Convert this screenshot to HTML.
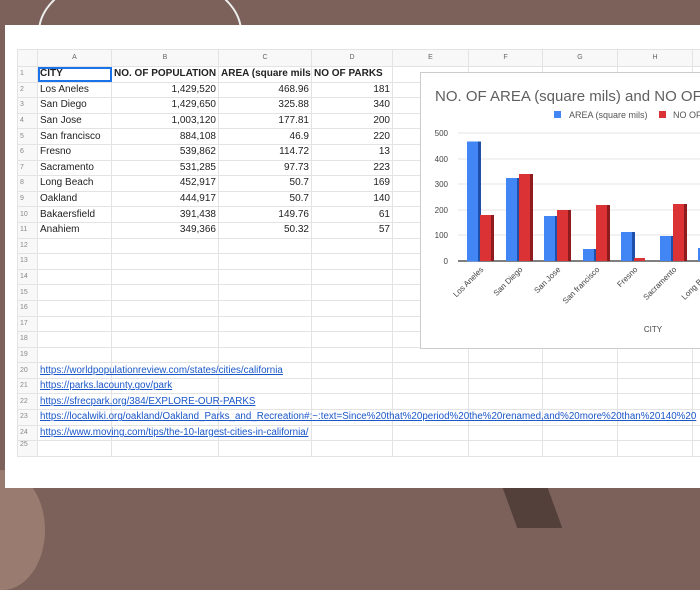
<!DOCTYPE html>
<html><head><meta charset="utf-8"><style>
body{margin:0;width:700px;height:525px;overflow:hidden;background:#7b6159;position:relative;font-family:"Liberation Sans",sans-serif}
.abs{position:absolute}
#panel{left:5px;top:25px;width:695px;height:463px;background:#fff}
table{position:absolute;left:17px;top:49px;width:683px;border-collapse:collapse;table-layout:fixed;font-size:10px;color:#222}
td{border:1px solid #e3e3e3;height:14.6px;padding:0 2px;white-space:nowrap;overflow:visible;line-height:14px;max-width:0}
tr.h td{background:#f8f8f8;color:#666;text-align:center;font-size:7px;height:16px}
td.n{background:#f8f8f8;color:#888;font-size:7px;text-align:left;padding-left:2px}
td.r{text-align:right}
b{font-weight:bold}
a{color:#1a57c9;text-decoration:underline;font-size:9.8px}
</style></head><body>
<div class="abs" style="left:-40px;top:470px;width:85px;height:120px;border-radius:50%;background:#9a7b70"></div>
<div class="abs" style="left:510px;top:488px;width:45px;height:40px;background:#53403a;transform:skewX(20deg)"></div>
<div class="abs" style="left:38px;top:-30px;width:200px;height:120px;border:2px solid #eee;border-radius:50%"></div>
<div class="abs" id="panel"></div>
<table>
<colgroup><col style="width:20px"><col style="width:74px"><col style="width:107px"><col style="width:93px"><col style="width:81px"><col style="width:76px"><col style="width:74px"><col style="width:75px"><col style="width:75px"><col style="width:8px"></colgroup>
<tr class="h"><td></td><td>A</td><td>B</td><td>C</td><td>D</td><td>E</td><td>F</td><td>G</td><td>H</td><td></td></tr>
<tr><td class="n">1</td><td style="outline:2px solid #1a73e8;outline-offset:-2px"><b>CITY</b></td><td><b>NO. OF POPULATION</b></td><td><b>AREA (square mils</b></td><td><b>NO OF PARKS</b></td><td></td><td></td><td></td><td></td><td></td></tr>
<tr><td class="n">2</td><td>Los Aneles</td><td class="r">1,429,520</td><td class="r">468.96</td><td class="r">181</td><td></td><td></td><td></td><td></td><td></td></tr>
<tr><td class="n">3</td><td>San Diego</td><td class="r">1,429,650</td><td class="r">325.88</td><td class="r">340</td><td></td><td></td><td></td><td></td><td></td></tr>
<tr><td class="n">4</td><td>San Jose</td><td class="r">1,003,120</td><td class="r">177.81</td><td class="r">200</td><td></td><td></td><td></td><td></td><td></td></tr>
<tr><td class="n">5</td><td>San francisco</td><td class="r">884,108</td><td class="r">46.9</td><td class="r">220</td><td></td><td></td><td></td><td></td><td></td></tr>
<tr><td class="n">6</td><td>Fresno</td><td class="r">539,862</td><td class="r">114.72</td><td class="r">13</td><td></td><td></td><td></td><td></td><td></td></tr>
<tr><td class="n">7</td><td>Sacramento</td><td class="r">531,285</td><td class="r">97.73</td><td class="r">223</td><td></td><td></td><td></td><td></td><td></td></tr>
<tr><td class="n">8</td><td>Long Beach</td><td class="r">452,917</td><td class="r">50.7</td><td class="r">169</td><td></td><td></td><td></td><td></td><td></td></tr>
<tr><td class="n">9</td><td>Oakland</td><td class="r">444,917</td><td class="r">50.7</td><td class="r">140</td><td></td><td></td><td></td><td></td><td></td></tr>
<tr><td class="n">10</td><td>Bakaersfield</td><td class="r">391,438</td><td class="r">149.76</td><td class="r">61</td><td></td><td></td><td></td><td></td><td></td></tr>
<tr><td class="n">11</td><td>Anahiem</td><td class="r">349,366</td><td class="r">50.32</td><td class="r">57</td><td></td><td></td><td></td><td></td><td></td></tr>
<tr><td class="n">12</td><td></td><td></td><td></td><td></td><td></td><td></td><td></td><td></td><td></td></tr>
<tr><td class="n">13</td><td></td><td></td><td></td><td></td><td></td><td></td><td></td><td></td><td></td></tr>
<tr><td class="n">14</td><td></td><td></td><td></td><td></td><td></td><td></td><td></td><td></td><td></td></tr>
<tr><td class="n">15</td><td></td><td></td><td></td><td></td><td></td><td></td><td></td><td></td><td></td></tr>
<tr><td class="n">16</td><td></td><td></td><td></td><td></td><td></td><td></td><td></td><td></td><td></td></tr>
<tr><td class="n">17</td><td></td><td></td><td></td><td></td><td></td><td></td><td></td><td></td><td></td></tr>
<tr><td class="n">18</td><td></td><td></td><td></td><td></td><td></td><td></td><td></td><td></td><td></td></tr>
<tr><td class="n">19</td><td></td><td></td><td></td><td></td><td></td><td></td><td></td><td></td><td></td></tr>
<tr><td class="n">20</td><td><a>https://worldpopulationreview.com/states/cities/california</a></td><td></td><td></td><td></td><td></td><td></td><td></td><td></td><td></td></tr>
<tr><td class="n">21</td><td><a>https://parks.lacounty.gov/park</a></td><td></td><td></td><td></td><td></td><td></td><td></td><td></td><td></td></tr>
<tr><td class="n">22</td><td><a>https://sfrecpark.org/384/EXPLORE-OUR-PARKS</a></td><td></td><td></td><td></td><td></td><td></td><td></td><td></td><td></td></tr>
<tr><td class="n">23</td><td><a>https://localwiki.org/oakland/Oakland_Parks_and_Recreation#:~:text=Since%20that%20period%20the%20renamed,and%20more%20than%20140%20</a></td><td></td><td></td><td></td><td></td><td></td><td></td><td></td><td></td></tr>
<tr><td class="n">24</td><td><a>https://www.moving.com/tips/the-10-largest-cities-in-california/</a></td><td></td><td></td><td></td><td></td><td></td><td></td><td></td><td></td></tr>
<tr><td class="n" style="height:7px;line-height:7px;vertical-align:top">25</td><td style="height:7px"></td><td></td><td></td><td></td><td></td><td></td><td></td><td></td><td></td></tr>
</table>
<svg class="abs" style="left:420px;top:72px" width="280" height="277" font-family="Liberation Sans, sans-serif">
<rect x="0.5" y="0.5" width="290" height="276" fill="#fff" stroke="#ccc"/>
<text x="15" y="29" font-size="15" fill="#5f5f5f">NO. OF AREA (square mils) and NO OF PARKS</text>
<rect x="134" y="39" width="7" height="7" fill="#4285f4"/><text x="149" y="46" font-size="9" fill="#555">AREA (square mils)</text>
<rect x="239" y="39" width="7" height="7" fill="#db3236"/><text x="253" y="46" font-size="9" fill="#555">NO OF PARKS</text>
<g stroke="#e6e6e6"><line x1="38" x2="280" y1="61" y2="61"/><line x1="38" x2="280" y1="87" y2="87"/><line x1="38" x2="280" y1="112" y2="112"/><line x1="38" x2="280" y1="138" y2="138"/><line x1="38" x2="280" y1="163" y2="163"/></g>
<g font-size="8" fill="#444" text-anchor="end"><text x="28" y="64">500</text><text x="28" y="90">400</text><text x="28" y="115">300</text><text x="28" y="141">200</text><text x="28" y="166">100</text><text x="28" y="192">0</text></g>
<line x1="38" x2="280" y1="189" y2="189" stroke="#555" stroke-width="1.5"/>
<g>
<rect x="47" y="69.5" width="11" height="120" fill="#4285f4"/><rect x="58" y="69.5" width="3" height="120" fill="#1f4fa8"/>
<rect x="60" y="143" width="11" height="46" fill="#db3236"/><rect x="71" y="143" width="3" height="46" fill="#8e1c1e"/>
<rect x="86" y="106" width="11" height="83" fill="#4285f4"/><rect x="97" y="106" width="3" height="83" fill="#1f4fa8"/>
<rect x="99" y="102" width="11" height="87" fill="#db3236"/><rect x="110" y="102" width="3" height="87" fill="#8e1c1e"/>
<rect x="124" y="144" width="11" height="45" fill="#4285f4"/><rect x="135" y="144" width="3" height="45" fill="#1f4fa8"/>
<rect x="137" y="138" width="11" height="51" fill="#db3236"/><rect x="148" y="138" width="3" height="51" fill="#8e1c1e"/>
<rect x="163" y="177" width="11" height="12" fill="#4285f4"/><rect x="174" y="177" width="3" height="12" fill="#1f4fa8"/>
<rect x="176" y="133" width="11" height="56" fill="#db3236"/><rect x="187" y="133" width="3" height="56" fill="#8e1c1e"/>
<rect x="201" y="160" width="11" height="29" fill="#4285f4"/><rect x="212" y="160" width="3" height="29" fill="#1f4fa8"/>
<rect x="214" y="186" width="11" height="3" fill="#db3236"/>
<rect x="240" y="164" width="11" height="25" fill="#4285f4"/><rect x="251" y="164" width="3" height="25" fill="#1f4fa8"/>
<rect x="253" y="132" width="11" height="57" fill="#db3236"/><rect x="264" y="132" width="3" height="57" fill="#8e1c1e"/>
<rect x="278" y="176" width="11" height="13" fill="#4285f4"/>
</g>
<g font-size="8" fill="#444" text-anchor="end">
<text transform="translate(64,198) rotate(-45)">Los Aneles</text>
<text transform="translate(103,198) rotate(-45)">San Diego</text>
<text transform="translate(141,198) rotate(-45)">San Jose</text>
<text transform="translate(180,198) rotate(-45)">San francisco</text>
<text transform="translate(218,198) rotate(-45)">Fresno</text>
<text transform="translate(257,198) rotate(-45)">Sacramento</text>
<text transform="translate(295,198) rotate(-45)">Long Beach</text>
</g>
<text x="233" y="260" font-size="8" fill="#444" text-anchor="middle">CITY</text>
</svg>
</body></html>
